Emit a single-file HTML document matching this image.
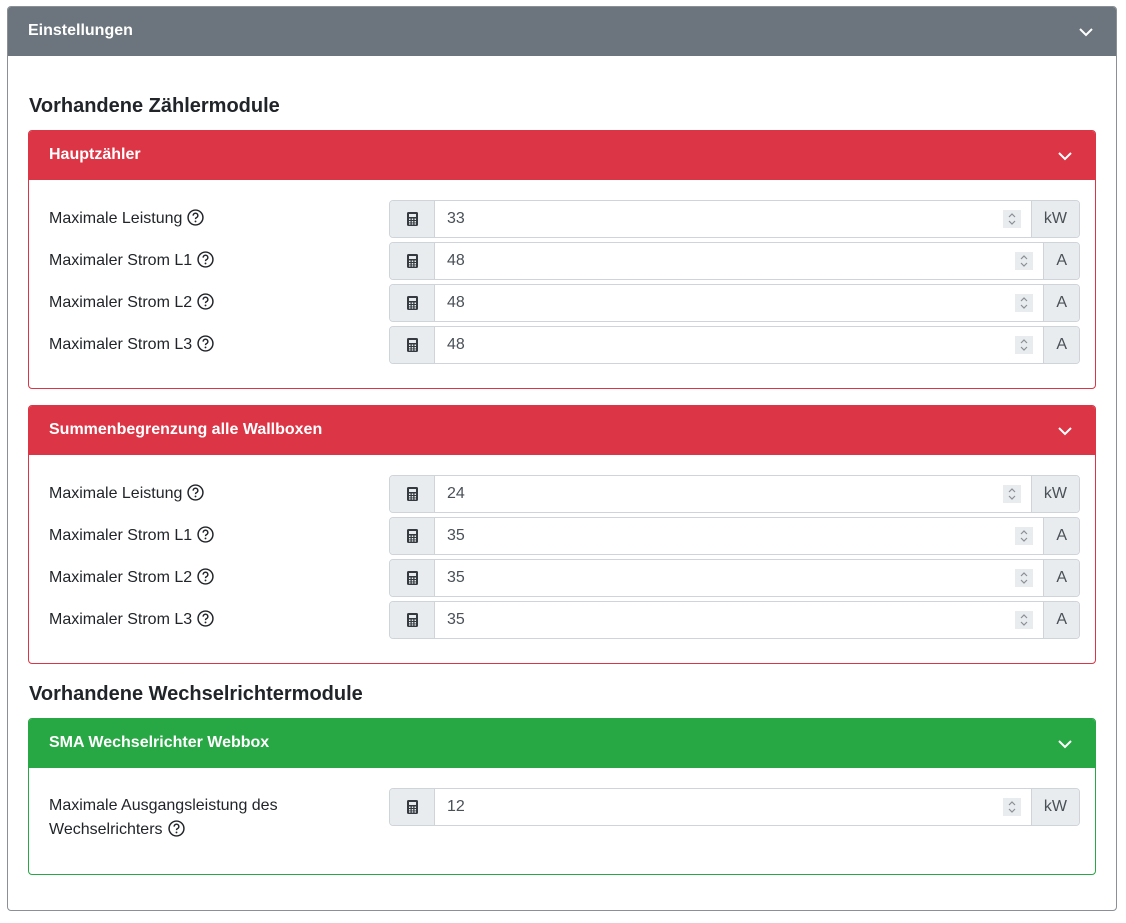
<!DOCTYPE html>
<html><head><meta charset="utf-8"><style>
*{box-sizing:border-box;margin:0;padding:0}
body{width:1126px;height:923px;background:#fff;font-family:"Liberation Sans",sans-serif;color:#212529;position:relative;overflow:hidden}
.abs{position:absolute}
.outer{left:7px;top:6px;width:1110px;height:905px;border:1px solid #8a9096;border-radius:4px;overflow:hidden}
.ohead{left:0;top:0;width:100%;height:49px;background:#6c757d;color:#fff;font-weight:bold;font-size:16px;padding:15px 20px}
.chev{position:absolute;right:22px;top:20px;width:16px;height:10px}
h2{position:absolute;left:29px;font-size:20px;font-weight:bold}
.card{position:absolute;left:28px;width:1068px;border:1px solid;border-radius:4px;overflow:hidden}
.card .hd{height:49px;color:#fff;font-weight:bold;font-size:16px;padding:15px 20px;position:relative}
.red{border-color:#dc3545}.red .hd{background:#dc3545}
.green{border-color:#28a745}.green .hd{background:#28a745}
.lbl{position:absolute;left:20px;font-size:16px;line-height:24px}
.q{display:inline-block;width:17px;height:17px;vertical-align:-3px;margin-left:5px}
.ig{position:absolute;left:360px;width:691px;height:38px;border:1px solid #ced4da;border-radius:4px;overflow:hidden;display:flex;font-size:16px}
.ic{width:45px;background:#e9ecef;border-right:1px solid #ced4da;display:flex;align-items:center;justify-content:center}
.val{flex:1;padding:9px 12px 7px;color:#495057;position:relative}
.sp{position:absolute;right:10px;top:9px;width:18px;height:18px;background:#e9ecef}
.un{background:#e9ecef;border-left:1px solid #ced4da;padding:9px 12px 7px;color:#495057}
</style></head><body>
<div class="abs outer">
<div class="abs ohead">Einstellungen<svg class="chev" viewBox="0 0 16 10"><path d="M2 2l6 6 6-6" stroke="#fff" stroke-width="2" fill="none"/></svg></div>
</div>
<h2 style="top:95px">Vorhandene Zählermodule</h2>
<h2 style="top:683px">Vorhandene Wechselrichtermodule</h2>

<div class="card red" style="top:130px;height:259px"><div class="hd">Hauptzähler<svg class="chev" viewBox="0 0 16 10"><path d="M2 2l6 6 6-6" stroke="#fff" stroke-width="2" fill="none"/></svg></div></div>
<div class="card red" style="top:405px;height:259px"><div class="hd">Summenbegrenzung alle Wallboxen<svg class="chev" viewBox="0 0 16 10"><path d="M2 2l6 6 6-6" stroke="#fff" stroke-width="2" fill="none"/></svg></div></div>
<div class="card green" style="top:718px;height:157px"><div class="hd">SMA Wechselrichter Webbox<svg class="chev" viewBox="0 0 16 10"><path d="M2 2l6 6 6-6" stroke="#fff" stroke-width="2" fill="none"/></svg></div></div>

<div id="rows"></div>
<script>
const calc='<svg width="11" height="14" viewBox="0 0 11 14"><rect x="0" y="0" width="11" height="14" rx="1.5" fill="#343a40"/><rect x="2" y="2" width="7" height="3" fill="#e9ecef"/><g fill="#e9ecef"><rect x="2" y="6.5" width="1.5" height="1.5"/><rect x="4.75" y="6.5" width="1.5" height="1.5"/><rect x="7.5" y="6.5" width="1.5" height="1.5"/><rect x="2" y="9" width="1.5" height="1.5"/><rect x="4.75" y="9" width="1.5" height="1.5"/><rect x="7.5" y="9" width="1.5" height="1.5"/><rect x="2" y="11.3" width="1.5" height="1.3"/><rect x="4.75" y="11.3" width="1.5" height="1.3"/><rect x="7.5" y="11.3" width="1.5" height="1.3"/></g></svg>';
const spin='<div class="sp"><svg width="18" height="18" viewBox="0 0 18 18"><path d="M6 7l3-3 3 3M6 11l3 3 3-3" stroke="#8a8f95" stroke-width="1.2" fill="none"/></svg></div>';
const q='<svg class="q" viewBox="0 0 16 16"><circle cx="8" cy="8" r="7" stroke="#212529" stroke-width="1.4" fill="none"/><path d="M5.8 6.2a2.2 2.2 0 1 1 3 2c-.6.3-.8.6-.8 1.3" stroke="#212529" stroke-width="1.4" fill="none"/><circle cx="8" cy="11.7" r=".9" fill="#212529"/></svg>';
let h='';
function row(top,label,v,u){
 h+=`<div class="lbl abs" style="left:49px;top:${top+7}px">${label}${q}</div>`;
 h+=`<div class="ig" style="left:389px;top:${top}px"><div class="ic">${calc}</div><div class="val">${v}${spin}</div><div class="un">${u}</div></div>`;
}
[[200,'33'],[475,'24']].forEach(([t,v],i)=>{
 const a=i?'35':'48';
 row(t,'Maximale Leistung',v,'kW');
 row(t+42,'Maximaler Strom L1',a,'A');
 row(t+84,'Maximaler Strom L2',a,'A');
 row(t+126,'Maximaler Strom L3',a,'A');
});
h+=`<div class="lbl abs" style="left:49px;top:794px">Maximale Ausgangsleistung des<br>Wechselrichters${q}</div>`;
h+=`<div class="ig" style="left:389px;top:788px"><div class="ic">${calc}</div><div class="val">12${spin}</div><div class="un">kW</div></div>`;
document.getElementById('rows').innerHTML=h;
</script>
</body></html>
